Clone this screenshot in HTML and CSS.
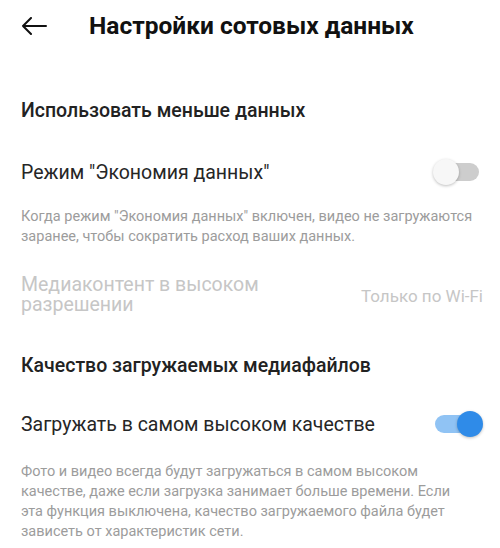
FILE: index.html
```html
<!DOCTYPE html>
<html lang="ru">
<head>
<meta charset="utf-8">
<link rel="stylesheet" href="styles.css">
</head>
<body>
<header class="header">
  <svg class="back" width="26" height="18" viewBox="0 0 26 18" fill="none" stroke="#111" stroke-width="2" stroke-linecap="round" stroke-linejoin="round">
    <path d="M25 9H2M10 1L2 9L10 17"/>
  </svg>
  <h1 class="title">Настройки сотовых данных</h1>
</header>
<main class="content">
  <h2 class="section s1">Использовать меньше данных</h2>
  <div class="row r1">
    <span class="label">Режим "Экономия данных"</span>
    <span class="switch off"><span class="track"></span><span class="thumb"></span></span>
  </div>
  <p class="desc d1">Когда режим "Экономия данных" включен, видео не загружаются<br>заранее, чтобы сократить расход ваших данных.</p>
  <div class="media">
    <span class="media-label">Медиаконтент в высоком<br>разрешении</span>
    <span class="media-value">Только по Wi-Fi</span>
  </div>
  <h2 class="section s2">Качество загружаемых медиафайлов</h2>
  <div class="row r2">
    <span class="label">Загружать в самом высоком качестве</span>
    <span class="switch on"><span class="track"></span><span class="thumb"></span></span>
  </div>
  <p class="desc d2">Фото и видео всегда будут загружаться в самом высоком<br>качестве, даже если загрузка занимает больше времени. Если<br>эта функция выключена, качество загружаемого файла будет<br>зависеть от характеристик сети.</p>
</main>
</body>
</html>
```
FILE: styles.css
```css
* { box-sizing: border-box; }
html, body { margin: 0; padding: 0; background: #fff; }
body {
  font-family: Roboto, "Noto Sans", "DejaVu Sans", sans-serif;
  width: 500px;
  height: 548px;
  overflow: hidden;
}
.header {
  display: flex;
  align-items: center;
  height: 52px;
  padding-left: 21px;
  gap: 42px;
}
.back { display: block; flex: none; }
.title {
  margin: 0;
  font-size: 24.5px;
  font-weight: 700;
  color: #111;
  line-height: 52px;
  white-space: nowrap;
}
.content {
  padding: 0 17px 0 21px;
  display: flex;
  flex-direction: column;
}
.section {
  margin: 0;
  font-size: 19.5px;
  font-weight: 500;
  color: #222;
  line-height: 24px;
  white-space: nowrap;
}
.s1 { margin-top: 47px; }
.s2 { margin-top: 38.5px; }
.row {
  display: flex;
  align-items: center;
  justify-content: space-between;
  height: 48px;
}
.r1 { margin-top: 25px; }
.r2 { margin-top: 22.7px; }
.label {
  font-size: 19.5px;
  color: #262626;
  white-space: nowrap;
}
.switch {
  position: relative;
  width: 48px;
  height: 28px;
  flex: none;
}
.track {
  position: absolute;
  top: 5px;
  width: 44px;
  height: 18px;
  border-radius: 9px;
}
.thumb {
  position: absolute;
  top: 1px;
  width: 26px;
  height: 26px;
  border-radius: 50%;
}
.off { margin-right: 2px; }
.off .track { left: 2px; background: #cdcdcd; }
.off .thumb { left: 0; background: #f7f7f7; box-shadow: 0 1px 3px rgba(0,0,0,0.25); }
.on .track { left: 0; background: #90c3f4; }
.on .thumb { left: 22px; background: #2f8be8; box-shadow: 0 1px 3px rgba(0,0,0,0.25); }
.desc {
  margin: 0;
  font-size: 14.5px;
  line-height: 20px;
  color: #9c9c9c;
  white-space: nowrap;
}
.d1 { margin-top: 10.5px; }
.d2 { margin-top: 13.7px; }
.media {
  margin-top: 28.8px;
  display: flex;
  justify-content: space-between;
  align-items: flex-start;
  color: #c6c6c6;
}
.media-label {
  font-size: 19.5px;
  line-height: 20px;
  white-space: nowrap;
}
.media-value {
  font-size: 17px;
  line-height: 18px;
  margin-top: 11.4px;
  white-space: nowrap;
}
```
